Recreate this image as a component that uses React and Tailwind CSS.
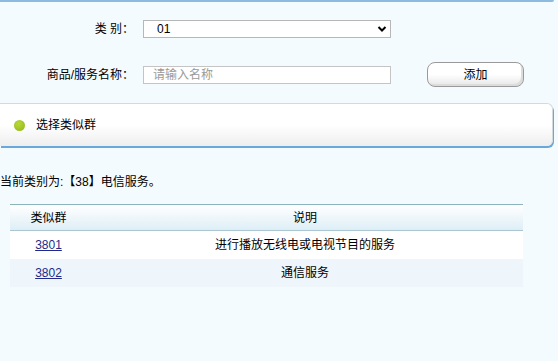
import React from "react";

export default function App() {
  return (
    <div
      className="w-[558px] h-[361px] bg-[#f3fbff] overflow-hidden text-[12px] text-black"
      style={{ fontFamily: '"Liberation Sans", "Noto Sans CJK SC", sans-serif' }}
    >
      <div className="h-[2px] w-[554px] bg-[#8dbbe0] rounded-br-[2px]" />

      {/* form */}
      <div className="pt-[18px]">
        <div className="flex items-center h-[18px]">
          <div className="w-[134px] text-right">类&nbsp;别：</div>
          <div className="ml-[9px] w-[248px] h-[18px] border border-[#b7b7b7] bg-white flex items-center justify-between pl-[13px] pr-[3px]">
            <span>01</span>
            <svg width="10" height="8" viewBox="0 0 10 8">
              <path d="M1.5 2 L5 5.5 L8.5 2" fill="none" stroke="#000" strokeWidth="2" />
            </svg>
          </div>
        </div>
        <div className="flex items-center h-[25px] mt-[24px]">
          <div className="w-[134px] text-right">商品/服务名称：</div>
          <div className="ml-[9px] w-[248px] h-[18px] border border-[#c4c4c4] bg-white flex items-center pl-[9px] text-[#9a9a9a]">
            请输入名称
          </div>
          <div className="ml-[36px] w-[97px] h-[25px] rounded-[8px] border border-[#9a9a9a] bg-gradient-to-b from-white via-white to-[#e6e6e6] shadow-[inset_-2px_-2px_0_#dcdcdc] flex items-center justify-center">
            添加
          </div>
        </div>
      </div>

      {/* panel */}
      <div className="mt-[16px] w-[553px] h-[43px] border-t border-r border-[#d3dade] rounded-r-[6px] bg-gradient-to-b from-white via-white to-[#eeeeee] shadow-[1px_2px_0_#6aa8db] flex items-center">
        <div className="ml-[14px] w-[11px] h-[11px] rounded-full bg-[radial-gradient(circle_at_40%_35%,#b8d83a,#8fb512)]" />
        <div className="ml-[11px]">选择类似群</div>
      </div>

      <div className="mt-[29px] h-[14px] flex items-center">当前类别为:【38】电信服务。</div>

      {/* table */}
      <div className="mt-[15px] ml-[10px] w-[513px]">
        <div className="flex h-[27px] border-t border-[#8db4bd] border-b border-b-[#a9c6d2] bg-gradient-to-b from-white to-[#deeef6] items-center">
          <div className="w-[77px] text-center">类似群</div>
          <div className="flex-1 text-center">说明</div>
        </div>
        <div className="flex h-[28px] bg-white items-center">
          <div className="w-[77px] text-center">
            <span className="underline text-[#1f2a8a]">3801</span>
          </div>
          <div className="flex-1 text-center">进行播放无线电或电视节目的服务</div>
        </div>
        <div className="flex h-[28px] bg-[#eef6fc] items-center">
          <div className="w-[77px] text-center">
            <span className="underline text-[#1f2a8a]">3802</span>
          </div>
          <div className="flex-1 text-center">通信服务</div>
        </div>
      </div>
    </div>
  );
}
